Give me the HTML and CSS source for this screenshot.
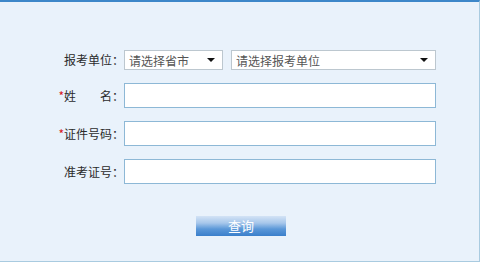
FILE: index.html
```html
<!DOCTYPE html>
<html lang="zh-CN">
  <head>
    <meta charset="UTF-8" />
    <title>成绩查询</title>
    <link rel="stylesheet" href="styles.css">
  </head>
  <body>
    <div class="panel">
      <div class="form">
        <div class="row row-first">
          <label class="label">报考单位：</label>
          <div class="field">
            <div class="select select-city">
              <span>请选择省市</span>
              <i class="arrow"></i>
            </div>
            <div class="select select-unit">
              <span>请选择报考单位</span>
              <i class="arrow"></i>
            </div>
          </div>
        </div>
        <div class="row">
          <label class="label"><em>*</em>姓　　名：</label>
          <input type="text" class="text" />
        </div>
        <div class="row">
          <label class="label"><em>*</em>证件号码：</label>
          <input type="text" class="text" />
        </div>
        <div class="row">
          <label class="label">准考证号：</label>
          <input type="text" class="text" />
        </div>
      </div>
      <div class="actions">
        <button class="btn">查询</button>
      </div>
    </div>
  </body>
</html>
```

FILE: styles.css
```css
* {
  margin: 0;
  padding: 0;
  box-sizing: border-box;
}
body {
  background: #ffffff;
  font-family: "Noto Sans CJK SC", "Liberation Sans", sans-serif;
  font-size: 12px;
  color: #333333;
}
.panel {
  width: 480px;
  height: 262px;
  background: #e9f2fb;
  border-top: 2px solid #3d87c9;
  border-right: 1px solid #a9cbe0;
  border-bottom: 1px solid #a9cbe0;
  padding-top: 48px;
}
.form {
  display: flex;
  flex-direction: column;
  gap: 13px;
}
.row {
  display: flex;
  align-items: center;
  height: 25px;
}
.row-first {
  height: 20px;
}
.label {
  width: 124px;
  padding-right: 0;
  text-align: right;
  white-space: nowrap;
  line-height: 14px;
  color: #2b2b2b;

  em {
    font-style: normal;
    color: #d8161b;
  }
}
.field {
  display: flex;
  gap: 8px;
}
.select {
  height: 20px;
  display: flex;
  align-items: center;
  justify-content: space-between;
  background: #ffffff;
  border: 1px solid #bcc7cf;
  padding: 0 7px 0 4px;
  color: #555555;
  font-size: 12px;
}
.select-city {
  width: 99px;
}
.select-unit {
  width: 205px;
}
.arrow {
  width: 0;
  height: 0;
  border-left: 4px solid transparent;
  border-right: 4px solid transparent;
  border-top: 4px solid #111111;
}
.text {
  width: 312px;
  height: 25px;
  border: 1px solid #8db8d6;
  background: #ffffff;
  outline: none;
}
.actions {
  display: flex;
  padding: 32px 0 0 196px;
}
.btn {
  width: 90px;
  height: 20px;
  border: none;
  color: #ffffff;
  font-family: "Noto Sans CJK SC", sans-serif;
  font-size: 13px;
  line-height: 18px;
  background: linear-gradient(to bottom, #d3e3f5 0%, #a7c7eb 35%, #5b98d8 65%, #3a7fcb 100%);
}
```
